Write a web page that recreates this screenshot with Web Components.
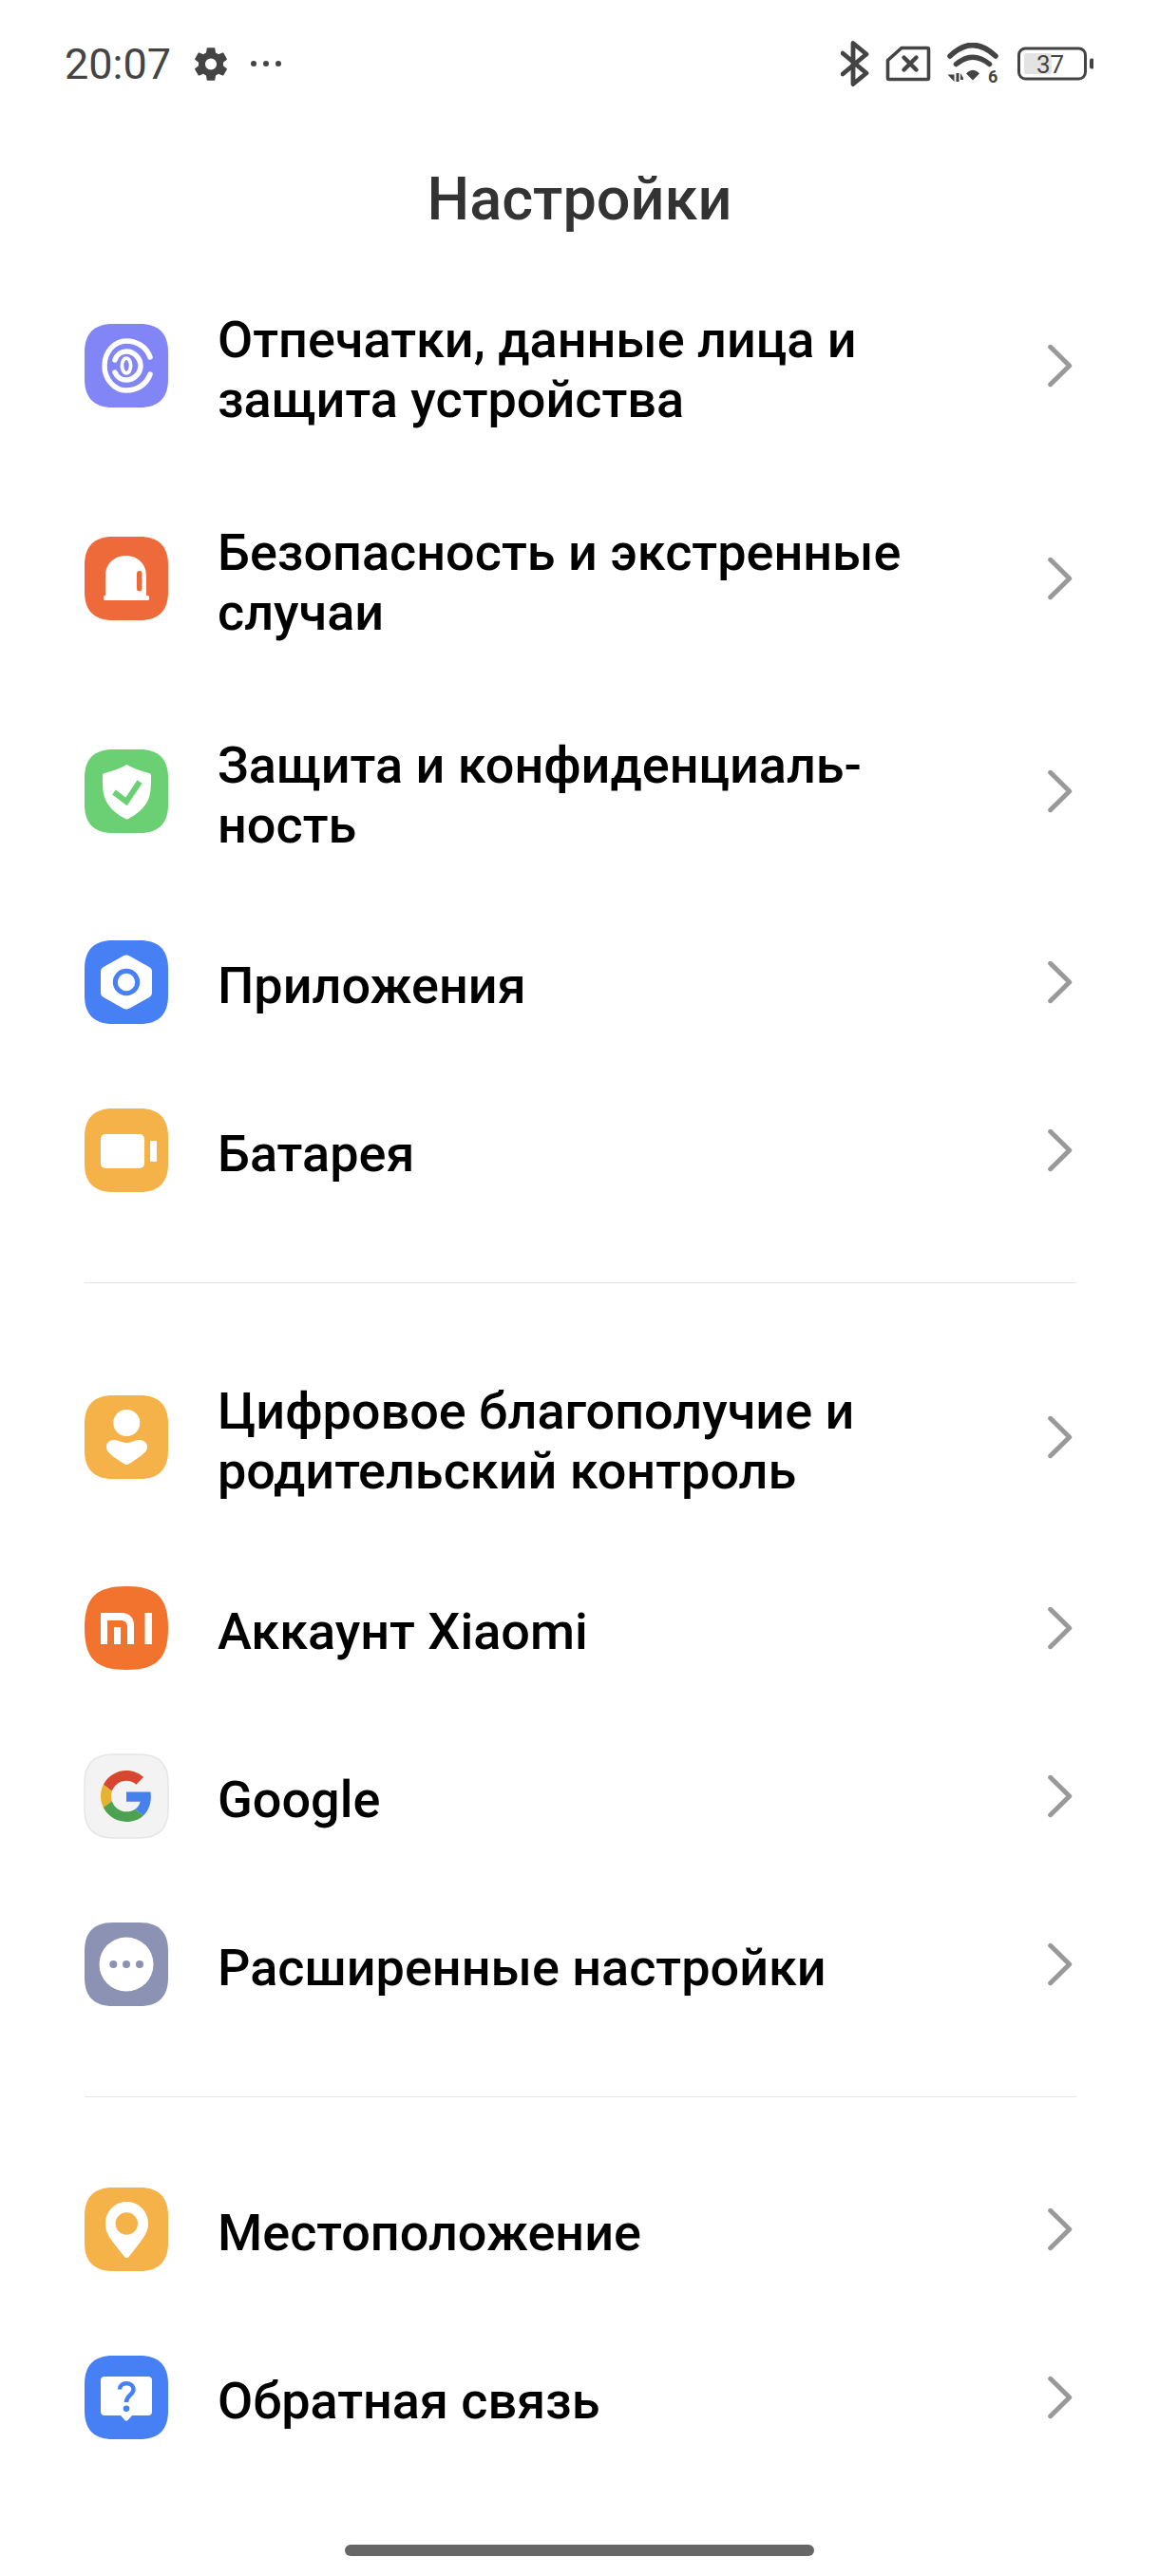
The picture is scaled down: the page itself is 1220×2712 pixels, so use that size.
<!doctype html>
<html>
<head>
<meta charset="utf-8">
<title>Настройки</title>
<style>
  html, body { margin: 0; background: #fff; }
  body { width: 1220px; height: 2712px; overflow: hidden; font-family: Roboto, "Noto Sans", sans-serif; }
</style>
</head>
<body>
<phone-screen>
  <status-bar></status-bar>
  <screen-title>Настройки</screen-title>
  <settings-group>
    <settings-row icon="fingerprint">Отпечатки, данные лица и<br>защита устройства</settings-row>
    <settings-row icon="alarm">Безопасность и экстренные<br>случаи</settings-row>
    <settings-row icon="shield">Защита и конфиденциаль-<br>ность</settings-row>
    <settings-row icon="apps">Приложения</settings-row>
    <settings-row icon="battery">Батарея</settings-row>
  </settings-group>
  <settings-divider></settings-divider>
  <settings-group>
    <settings-row icon="wellbeing">Цифровое благополучие и<br>родительский контроль</settings-row>
    <settings-row icon="mi">Аккаунт Xiaomi</settings-row>
    <settings-row icon="google">Google</settings-row>
    <settings-row icon="more">Расширенные настройки</settings-row>
  </settings-group>
  <settings-divider></settings-divider>
  <settings-group>
    <settings-row icon="location">Местоположение</settings-row>
    <settings-row icon="feedback">Обратная связь</settings-row>
  </settings-group>
  <home-bar></home-bar>
</phone-screen>

<script>
/** Squircle behind every app icon, in a 88x88 box. */
const SQUIRCLE = 'M30 0H58C78 0 88 10 88 30V58C88 78 78 88 58 88H30C10 88 0 78 0 58V30C0 10 10 0 30 0Z';
const ROUNDER = 'M44 0C76 0 88 12 88 44S76 88 44 88 0 76 0 44 12 0 44 0Z';

/** Icon drawings: background colour, outline and the inner marks. */
const ICONS = {
  fingerprint: { bg: '#8185f5', art: `
    <g fill="none" stroke="#fff" stroke-width="5.5" stroke-linecap="round">
      <path d="M69 35C65 24 55 18 44 18C31 18 21 30 21 44C21 58 31 70 44 70C55 70 65 64 69 53"/>
      <path d="M32 38C34 32 39 29 44 29C52 29 59 36 59 44C59 52 52 59 44 59C39 59 34 56 32 51"/>
      <ellipse cx="44" cy="44" rx="4.6" ry="7.8" stroke-width="3.8"/>
    </g>` },
  alarm: { bg: '#ee6a3a', art: `
    <path fill="#fff" d="M22 62V41C22 29 31 20 43.5 20S65 29 65 41V62H67C68.4 62 68.4 67 67 67H21C19.6 67 19.6 62 21 62Z"/>
    <rect x="55" y="36" width="5.4" height="21.5" rx="2.4" fill="#ee6a3a"/>` },
  shield: { bg: '#6ad073', art: `
    <path fill="#fff" d="M44.5 16C51 20 60 23 68 25C70 25.5 70 26 70 28C70 38 70 46 67 53C63 62 54 69 46 73C45 73.5 44 73.5 43 73C35 69 26 62 22 53C19 46 19 38 19 28C19 26 19 25.5 21 25C29 23 38 20 44.5 16Z"/>
    <path fill="none" stroke="#6ad073" stroke-width="6" d="M31 45L44 55L58 34"/>` },
  apps: { bg: '#4780f5', art: `
    <path fill="#fff" d="M40.5 16.5C42.8 15.2 45.2 15.2 47.5 16.5L68 28C70 29.2 71 30.8 71 33V55C71 57.2 70 58.8 68 60L47.5 71.5C45.2 72.8 42.8 72.8 40.5 71.5L20 60C18 58.8 17 57.2 17 55V33C17 30.8 18 29.2 20 28Z"/>
    <circle cx="44" cy="44" r="11.7" fill="none" stroke="#4780f5" stroke-width="5"/>` },
  battery: { bg: '#f5b248', art: `
    <rect x="17" y="27" width="46" height="36" rx="5" fill="#fff"/>
    <rect x="69" y="34" width="7" height="22" rx="1" fill="#fff"/>` },
  wellbeing: { bg: '#f5b248', art: `
    <circle cx="44.3" cy="29" r="14" fill="#fff"/>
    <path fill="#fff" d="M44.3 73C42.5 73 40 71 34 67C27 62.5 23 59 23 54C23 49.5 27 47 31 47C36 47 39 50 44.3 50C49.5 50 52.5 47 57.5 47C61.5 47 66 49.5 66 54C66 59 61.5 62.5 54.5 67C48.5 71 46 73 44.3 73Z"/>` },
  mi: { bg: '#f1732d', shape: ROUNDER, art: `
    <path fill="#fff" d="M17 28H39C47 28 52 33 52 41V61H45V43C45 38.5 42.5 36 38 36H24V61H17Z"/>
    <rect x="31" y="43" width="7" height="18" fill="#fff"/>
    <rect x="63.500" y="28" width="7.500" height="33" fill="#fff"/>` },
  google: { bg: '#f3f3f3', border: '#e6e6e6', art: `
    <g transform="translate(17 17) scale(1.125)">
      <path fill="#d6472f" d="M24 9.500c3.540 0 6.710 1.220 9.210 3.600l6.850-6.850C35.900 2.380 30.470 0 24 0 14.620 0 6.510 5.380 2.560 13.220l7.980 6.190C12.430 13.720 17.740 9.500 24 9.500z"/>
      <path fill="#4680ee" d="M46.980 24.550c0-1.570-.15-3.090-.38-4.550H24v9.020h12.940c-.58 2.960-2.260 5.480-4.780 7.180l7.730 6c4.510-4.180 7.090-10.360 7.090-17.650z"/>
      <path fill="#e8b231" d="M10.530 28.590c-.48-1.450-.76-2.990-.76-4.590s.27-3.140.76-4.590l-7.980-6.190C.92 16.460 0 20.120 0 24c0 3.880.92 7.540 2.560 10.780l7.970-6.190z"/>
      <path fill="#4da252" d="M24 48c6.480 0 11.930-2.130 15.890-5.810l-7.730-6c-2.150 1.450-4.920 2.300-8.160 2.300-6.260 0-11.570-4.220-13.470-9.910l-7.980 6.190C6.510 42.620 14.620 48 24 48z"/>
    </g>` },
  more: { bg: '#8b92b4', art: `
    <circle cx="44" cy="44" r="28.500" fill="#fff"/>
    <g fill="#8b92b4"><circle cx="30.300" cy="44" r="4"/><circle cx="44" cy="44" r="4"/><circle cx="58" cy="44" r="4"/></g>` },
  location: { bg: '#f5b248', art: `
    <path fill="#fff" d="M44.300 15C57 15 67 25 67 38C67 44 65 48 61.500 53.500C57 60 52 66 47 72.500C45.500 74.500 43.100 74.500 41.600 72.500C36.600 66 31.600 60 27 53.500C23.500 48 22 44 22 38C22 25 32 15 44.300 15Z"/>
    <circle cx="44.300" cy="38" r="11.700" fill="#f5b248"/>` },
  feedback: { bg: '#4780f5', art: `
    <path fill="#fff" d="M21 22H67C69.500 22 71 23.500 71 26V59C71 61.500 69.500 63 67 63H50L45.500 68C44.600 69 43.400 69 42.500 68L38 63H21C18.500 63 17 61.500 17 59V26C17 23.500 18.500 22 21 22Z"/>
    <path fill="none" stroke="#4780f5" stroke-width="4.500" d="M37 35.500C37 31.500 40 29.300 44 29.300C48.300 29.300 51.500 31.800 51.500 35.500C51.500 41.500 44 41.500 44 49"/>
    <circle cx="44" cy="55.800" r="3.300" fill="#4780f5"/>` },
};

class PhoneScreen extends HTMLElement {
  constructor() {
    super();
    this.attachShadow({ mode: 'open' }).innerHTML = `
      <style>
        :host { display: flex; flex-direction: column; width: 1220px; height: 2712px; background: #fff; }
      </style>
      <slot></slot>`;
  }
}

class StatusBar extends HTMLElement {
  constructor() {
    super();
    this.attachShadow({ mode: 'open' }).innerHTML = `
      <style>
        :host { display: flex; align-items: center; height: 134px; padding: 0 69px 0 68px; box-sizing: border-box; color: #444; }
        .time { font: 400 45px/1 Roboto, sans-serif; width: 137px; }
        svg { display: block; flex: none; }
        .left { display: flex; align-items: center; }
        .right { margin-left: auto; display: flex; align-items: center; }
        .pct { font: 400 26px Roboto, sans-serif; fill: #444; }
        .six { font: 700 18px Roboto, sans-serif; fill: #444; }
      </style>
      <div class="left">
        <span class="time">20:07</span>
        <svg width="34" height="35" viewBox="2.200 2 19.600 20" fill="#444"><path d="M19.430 12.980c.04-.32.07-.64.07-.98s-.03-.66-.07-.98l2.110-1.650a.5.500 0 0 0 .12-.64l-2-3.460a.5.500 0 0 0-.61-.22l-2.490 1a7.300 7.300 0 0 0-1.690-.98l-.38-2.650A.49.490 0 0 0 14 2h-4a.49.490 0 0 0-.49.420l-.38 2.650a7.700 7.700 0 0 0-1.690.98l-2.490-1a.49.490 0 0 0-.61.220l-2 3.460a.49.490 0 0 0 .12.640l2.110 1.650c-.04.32-.07.650-.07.980s.03.660.07.980l-2.110 1.650a.5.500 0 0 0-.12.640l2 3.460c.12.220.39.300.61.220l2.490-1c.52.400 1.080.730 1.690.980l.38 2.650c.03.240.24.420.49.420h4c.25 0 .46-.18.490-.42l.38-2.650a7.700 7.700 0 0 0 1.690-.98l2.490 1c.23.090.49 0 .61-.22l2-3.460a.5.500 0 0 0-.12-.64zM12 15.500a3.500 3.500 0 1 1 0-7 3.500 3.500 0 0 1 0 7z"/></svg>
        <svg style="margin-left:24px" width="34" height="8" viewBox="0 0 34 8" fill="#444"><circle cx="4" cy="4" r="3"/><circle cx="17" cy="4" r="3"/><circle cx="30" cy="4" r="3"/></svg>
      </div>
      <div class="right">
        <svg width="30" height="48" viewBox="887 43 30 48" fill="none" stroke="#444" stroke-width="4.800" stroke-linecap="round" stroke-linejoin="round"><path d="M889 56L914 77L900 88.500V45.500L914 57L889 78"/></svg>
        <svg style="margin-left:17px" width="48" height="40" viewBox="934 49 48 40" fill="none" stroke="#444" stroke-linejoin="round"><path stroke-width="3.600" d="M936.500 65.500L951 52.500H978C979 52.500 979.500 53 979.500 54V84C979.500 85 979 85.500 978 85.500H938C937 85.500 936.500 85 936.500 84Z"/><path stroke-width="4.400" stroke-linecap="round" d="M953.500 62.500L966.500 75.500M966.500 62.500L953.500 75.500"/></svg>
        <svg style="margin-left:16px" width="56" height="44" viewBox="998 47 56 44"><g fill="none" stroke="#444" stroke-width="5.500" stroke-linecap="round"><path d="M1002 61Q1026 38 1050 61"/><path d="M1008.500 69.500Q1026 55 1043.500 69.500"/></g><path fill="#444" d="M1019 79.500Q1026 72 1033 79.500L1026 86.500Z"/><path fill="#444" d="M999.500 80.500H1006.500V88ZM1008.500 79H1011.500V88H1008.500ZM1013 79L1016 84V86H1013Z"/><text class="six" x="1042" y="88.500">6</text></svg>
        <svg style="margin-left:19px" width="80" height="36" viewBox="1071 49 80 36"><rect x="1072.500" y="51" width="70" height="32" rx="7" fill="none" stroke="#444" stroke-width="3"/><rect x="1078" y="56" width="29" height="22" rx="2" fill="#e3e3e3"/><rect x="1147" y="61.500" width="4.500" height="11" rx="2" fill="#444"/><text class="pct" x="1091" y="77">37</text></svg>
      </div>`;
  }
}

class ScreenTitle extends HTMLElement {
  constructor() {
    super();
    this.attachShadow({ mode: 'open' }).innerHTML = `
      <style>
        :host { display: flex; align-items: center; justify-content: center; height: 128px; padding-top: 11px;
                font: 500 63px/1 Roboto, sans-serif; color: #333; }
      </style>
      <slot></slot>`;
  }
}

class SettingsGroup extends HTMLElement {
  constructor() {
    super();
    this.attachShadow({ mode: 'open' }).innerHTML = `
      <style>:host { display: flex; flex-direction: column; }</style>
      <slot></slot>`;
  }
}

class SettingsRow extends HTMLElement {
  connectedCallback() {
    const icon = ICONS[this.getAttribute('icon')];
    const twoLine = !!this.querySelector('br');
    this.shadowRoot.querySelector('.icon').innerHTML = `
      <path d="${icon.shape || SQUIRCLE}" fill="${icon.bg}" ${icon.border ? `stroke="${icon.border}" stroke-width="1.500"` : ''}/>${icon.art}`;
    this.style.height = twoLine ? '224px' : '177px';
  }
  constructor() {
    super();
    this.attachShadow({ mode: 'open' }).innerHTML = `
      <style>
        :host { display: flex; align-items: center; padding: 0 89px; box-sizing: border-box; }
        .icon { width: 88px; height: 88px; flex: none; overflow: visible; }
        .label { flex: 1; margin-left: 52px; padding-top: 8px; font: 500 54px/63px Roboto, sans-serif; color: #000; white-space: nowrap; }
        .chevron { width: 30px; height: 46px; flex: none; }
      </style>
      <svg class="icon" viewBox="0 0 88 88"></svg>
      <div class="label"><slot></slot></div>
      <svg class="chevron" viewBox="0 0 30 46" fill="none" stroke="#999" stroke-width="5" stroke-linecap="round" stroke-linejoin="round"><path d="M4.700 3.300L24.700 23L4.700 42.700"/></svg>`;
  }
}

class SettingsDivider extends HTMLElement {
  constructor() {
    super();
    this.attachShadow({ mode: 'open' }).innerHTML = `
      <style>:host { display: block; height: 1px; margin: 51px 87px 50px 89px; background: #e3e3e3; }</style>`;
  }
}

class HomeBar extends HTMLElement {
  constructor() {
    super();
    this.attachShadow({ mode: 'open' }).innerHTML = `
      <style>:host { display: block; width: 494px; height: 12px; margin: 67px auto 0; border-radius: 6px; background: #666; }</style>`;
  }
}

customElements.define('phone-screen', PhoneScreen);
customElements.define('status-bar', StatusBar);
customElements.define('screen-title', ScreenTitle);
customElements.define('settings-group', SettingsGroup);
customElements.define('settings-row', SettingsRow);
customElements.define('settings-divider', SettingsDivider);
customElements.define('home-bar', HomeBar);
</script>
</body>
</html>
